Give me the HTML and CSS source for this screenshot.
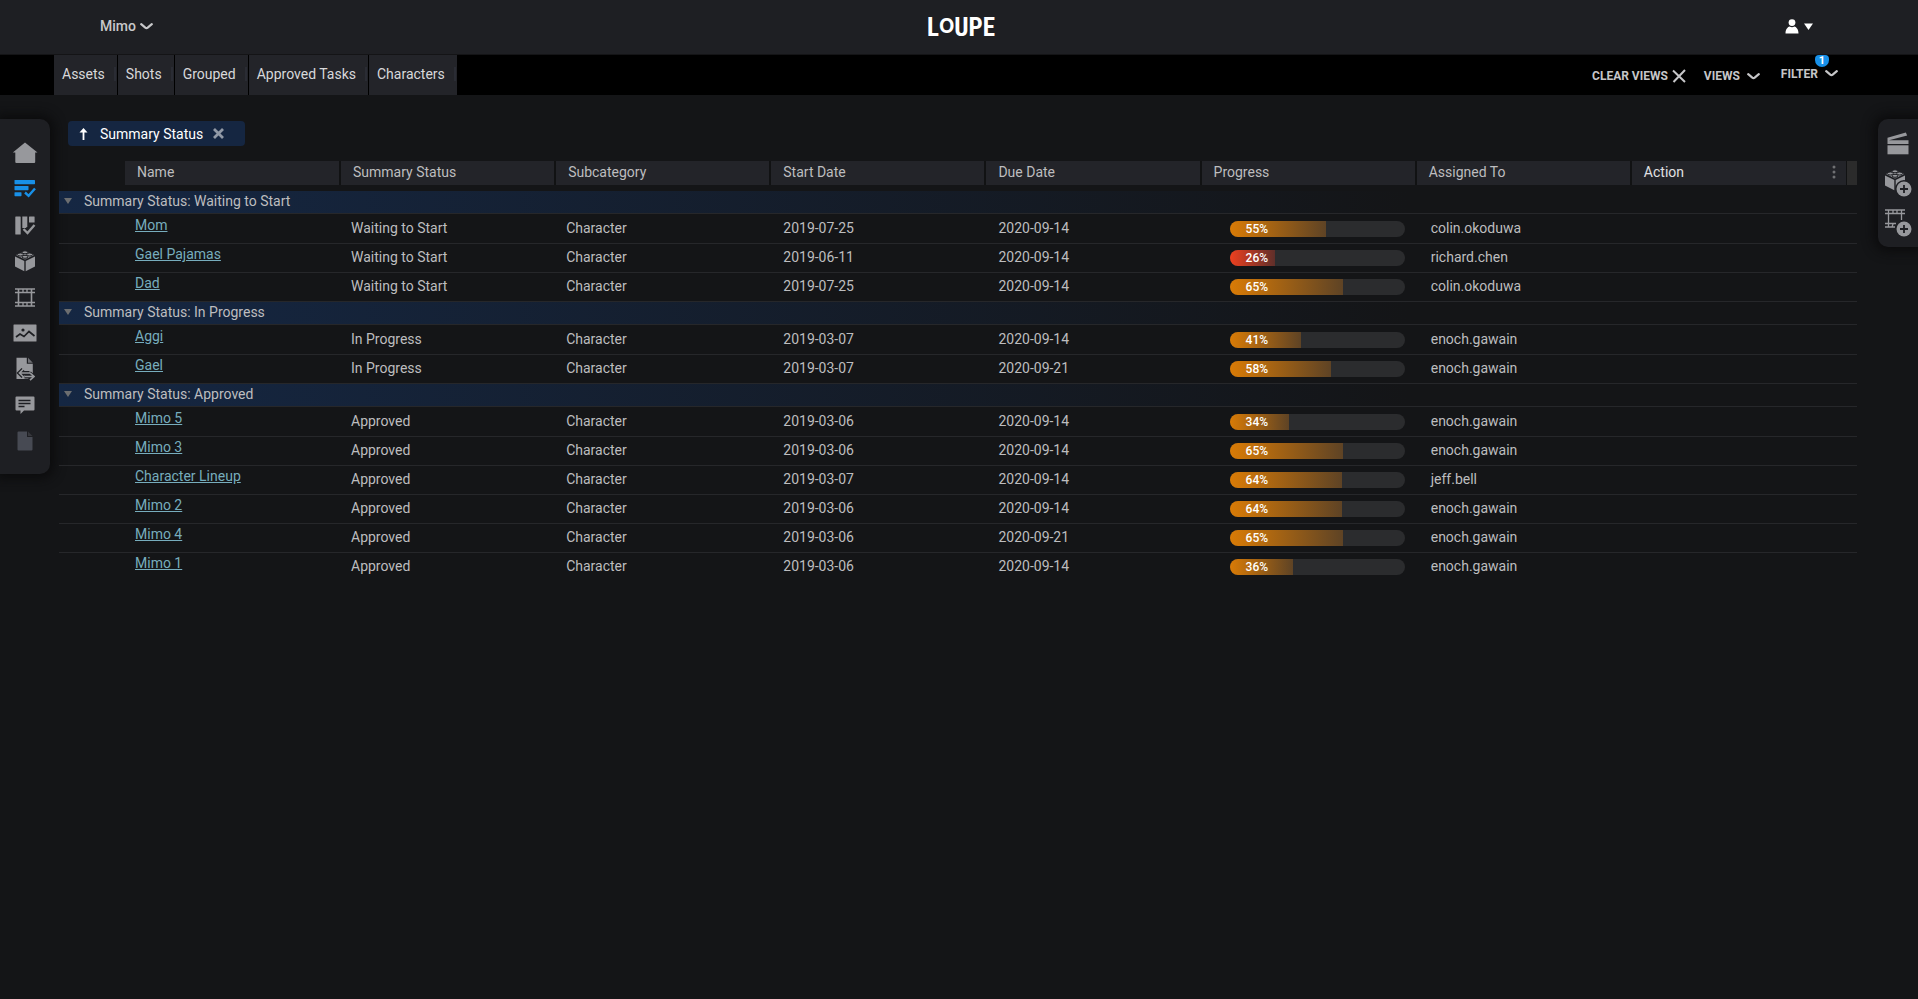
FILE: index.html
```html
<!DOCTYPE html>
<html lang="en">
<head>
<meta charset="utf-8">
<title>Loupe</title>
<link rel="stylesheet" href="styles.css">
</head>
<body>
<svg class="defs" aria-hidden="true">
  <symbol id="chevron" viewBox="0 0 13 7"><path d="M1.200 1.200 5.300 4.600Q6.500 5.500 7.700 4.600L11.800 1.200" fill="none" stroke="currentColor" stroke-width="2.200" stroke-linecap="round"/></symbol>
  <symbol id="plus" viewBox="0 0 16 16"><circle cx="8" cy="8" r="7.500" fill="currentColor"/><path d="M8 4v8M4 8h8" stroke="#1e1f23" stroke-width="1.800"/></symbol>
</svg>
<header class="header">
  <button class="project" type="button">Mimo <svg width="13" height="7"><use href="#chevron"/></svg></button>
  <div class="logo">L<span>O</span>UPE</div>
  <button class="user" type="button" aria-label="Account">
    <svg width="14" height="15" viewBox="0 0 14 15" fill="currentColor"><circle cx="7" cy="3.600" r="3.400"/><path d="M.5 14.500C.5 10 3 8 4.500 7.600Q7 9 9.500 7.600C11 8 13.500 10 13.500 14.500Z"/></svg>
    <svg width="9" height="7" viewBox="0 0 9 7" fill="currentColor"><path d="M0 .5h9L4.500 7Z"/></svg>
  </button>
</header>
<nav class="bar">
  <div class="tabs">
    <button type="button">Assets</button><button type="button">Shots</button><button type="button">Grouped</button><button type="button">Approved Tasks</button><button type="button">Characters</button>
  </div>
  <div class="tools">
    <button type="button" class="clear">CLEAR VIEWS <svg width="14" height="14" viewBox="0 0 14 14"><path d="M1 1.500 13 13M13 1 1.500 13" stroke="currentColor" stroke-width="2"/></svg></button>
    <button type="button" class="views">VIEWS <svg width="13" height="7"><use href="#chevron"/></svg></button>
    <button type="button" class="filter">FILTER <svg width="13" height="7"><use href="#chevron"/></svg><span class="badge">1</span></button>
  </div>
</nav>
<main class="page">
  <aside class="side left">
    <a href="#" aria-label="Home"><svg width="26" height="22" viewBox="0 0 26 22" fill="currentColor"><path d="M13 .5 25.500 10.500H23.200V20Q23.200 21 22.200 21H4.300Q3.300 21 3.300 20V10.500H.8Z"/></svg></a>
    <a href="#" class="active" aria-label="Tasks"><svg width="22" height="18" viewBox="0 0 22 18" fill="currentColor"><rect y="0" x=".5" width="20.500" height="4.200" rx=".6"/><rect x=".5" y="6" width="14" height="4.200" rx=".6"/><rect x=".5" y="12.200" width="7" height="4" rx=".6"/><path d="m11 12.500 3.600 3.300L21 8.500" fill="none" stroke="currentColor" stroke-width="2.400"/></svg></a>
    <a href="#" aria-label="Board"><svg width="22" height="19" viewBox="0 0 22 19" fill="currentColor"><rect x="1.300" y=".5" width="5.400" height="18" rx=".5"/><path d="M8.300.5h5v10l-1.500 1.600H8.300Z"/><rect x="15" y=".5" width="5.600" height="6" rx=".5"/><path d="m9.500 13 4 4L20.500 9" fill="none" stroke="currentColor" stroke-width="2.300"/></svg></a>
    <a href="#" aria-label="Assets"><svg width="22" height="22" viewBox="0 0 22 22"><g id="brick"><path d="M1 6.500 10.300 11V21.300L1 16.500ZM21 6.500 11.700 11V21.300L21 16.500Z" fill="currentColor"/><path d="M2 5 11 1.200 20 5 11 9.500Z" fill="currentColor"/><g fill="currentColor" stroke="#1e1f23"><ellipse cx="11" cy="2.300" rx="2.900" ry="1.500"/><ellipse cx="6.300" cy="4.500" rx="2.900" ry="1.500"/><ellipse cx="15.700" cy="4.500" rx="2.900" ry="1.500"/><ellipse cx="11" cy="6.800" rx="2.900" ry="1.500"/></g></g></svg></a>
    <a href="#" aria-label="Shots"><svg width="22" height="19" viewBox="0 0 22 19" fill="none" stroke="currentColor" stroke-width="1.300"><path d="M1 1H21M1 4.500H21M1 14.500H21M1 18H21"/><path d="M4.500 1V18M17.500 1V18" stroke-width="1.600"/><path d="M9 1V4.500M13 1V4.500M9 14.500V18M13 14.500V18"/></svg></a>
    <a href="#" aria-label="Media"><svg width="24" height="18" viewBox="0 0 24 18"><rect x=".5" y=".5" width="23" height="17" rx=".5" fill="currentColor"/><circle cx="10" cy="6" r="1.600" fill="#1e1f23"/><path d="m3 13 4-3 4 2.500 5-5 5.500 4.500" fill="none" stroke="#1e1f23" stroke-width="1.700"/></svg></a>
    <a href="#" aria-label="Transfers"><svg width="20" height="24" viewBox="0 0 20 24"><path d="M1.500.8h10.300v6h6V22H1.500Z" fill="currentColor"/><path d="m13 .8 4.800 5H13Z" fill="#6f7075"/><path d="M4.500 16h10M8 12.300 4.300 16 8 19.700M9.500 19.500H18M14.500 16l3.800 3.500-3.800 3.500" fill="none" stroke="#1e1f23" stroke-width="4"/><path d="M4.500 16H15M8.500 12 4.500 16l4 4M9.500 19.500H18.500M15 15.800l4 3.700-4 3.700" fill="none" stroke="currentColor" stroke-width="1.700"/></svg></a>
    <a href="#" aria-label="Notes"><svg width="20" height="18" viewBox="0 0 20 18"><path d="M1.500.5h17q1 0 1 1v12q0 1-1 1H9L5.500 18v-3.500h-4q-1 0-1-1v-12q0-1 1-1Z" fill="currentColor"/><path d="M3.500 4.500h12M3.500 7.500h12M3.500 10.500h6" stroke="#1e1f23" stroke-width="1.300"/></svg></a>
    <a href="#" class="muted" aria-label="Files"><svg width="16" height="20" viewBox="0 0 16 20" fill="currentColor"><path d="M1.500.5H10V6h5.500v12.500q0 1-1 1h-13q-1 0-1-1v-17q0-1 1-1Z"/><path d="M11 .5 15.500 5H11Z" fill="#36373c"/></svg></a>
  </aside>
  <section class="content">
    <div class="chip"><svg width="11" height="12" viewBox="0 0 11 12" fill="currentColor"><path d="M4.500 0 8.500 4.500H5.400V12H3.600V4.500H.5Z"/></svg><span>Summary Status</span><button type="button" aria-label="Remove grouping"><svg width="11" height="11" viewBox="0 0 11 11"><path d="m1 1 9 9m0-9-9 9" stroke="currentColor" stroke-width="2.800"/></svg></button></div>
    <table class="grid">
      <colgroup><col class="c-group"><col class="c-name"><col><col><col><col><col><col><col><col class="c-end"></colgroup>
      <thead>
        <tr><td></td><th>Name</th><th>Summary Status</th><th>Subcategory</th><th>Start Date</th><th>Due Date</th><th>Progress</th><th>Assigned To</th><th class="action"><div>Action<svg width="4" height="14" viewBox="0 0 4 14" fill="#6f7073"><circle cx="2" cy="2" r="1.500"/><circle cx="2" cy="7" r="1.500"/><circle cx="2" cy="12" r="1.500"/></svg></div></th><td class="end"></td></tr>
      </thead>
      <tbody>
        <tr class="group"><td colspan="10"><button type="button">Summary Status: Waiting to Start</button></td></tr>
        <tr><td></td><td><a href="#">Mom</a></td><td>Waiting to Start</td><td>Character</td><td>2019-07-25</td><td>2020-09-14</td><td><div class="meter"><div style="width:55%">55%</div></div></td><td>colin.okoduwa</td><td></td><td></td></tr>
        <tr><td></td><td><a href="#">Gael Pajamas</a></td><td>Waiting to Start</td><td>Character</td><td>2019-06-11</td><td>2020-09-14</td><td><div class="meter low"><div style="width:26%">26%</div></div></td><td>richard.chen</td><td></td><td></td></tr>
        <tr><td></td><td><a href="#">Dad</a></td><td>Waiting to Start</td><td>Character</td><td>2019-07-25</td><td>2020-09-14</td><td><div class="meter"><div style="width:65%">65%</div></div></td><td>colin.okoduwa</td><td></td><td></td></tr>
      </tbody>
      <tbody>
        <tr class="group"><td colspan="10"><button type="button">Summary Status: In Progress</button></td></tr>
        <tr><td></td><td><a href="#">Aggi</a></td><td>In Progress</td><td>Character</td><td>2019-03-07</td><td>2020-09-14</td><td><div class="meter"><div style="width:41%">41%</div></div></td><td>enoch.gawain</td><td></td><td></td></tr>
        <tr><td></td><td><a href="#">Gael</a></td><td>In Progress</td><td>Character</td><td>2019-03-07</td><td>2020-09-21</td><td><div class="meter"><div style="width:58%">58%</div></div></td><td>enoch.gawain</td><td></td><td></td></tr>
      </tbody>
      <tbody>
        <tr class="group"><td colspan="10"><button type="button">Summary Status: Approved</button></td></tr>
        <tr><td></td><td><a href="#">Mimo 5</a></td><td>Approved</td><td>Character</td><td>2019-03-06</td><td>2020-09-14</td><td><div class="meter"><div style="width:34%">34%</div></div></td><td>enoch.gawain</td><td></td><td></td></tr>
        <tr><td></td><td><a href="#">Mimo 3</a></td><td>Approved</td><td>Character</td><td>2019-03-06</td><td>2020-09-14</td><td><div class="meter"><div style="width:65%">65%</div></div></td><td>enoch.gawain</td><td></td><td></td></tr>
        <tr><td></td><td><a href="#">Character Lineup</a></td><td>Approved</td><td>Character</td><td>2019-03-07</td><td>2020-09-14</td><td><div class="meter"><div style="width:64%">64%</div></div></td><td>jeff.bell</td><td></td><td></td></tr>
        <tr><td></td><td><a href="#">Mimo 2</a></td><td>Approved</td><td>Character</td><td>2019-03-06</td><td>2020-09-14</td><td><div class="meter"><div style="width:64%">64%</div></div></td><td>enoch.gawain</td><td></td><td></td></tr>
        <tr><td></td><td><a href="#">Mimo 4</a></td><td>Approved</td><td>Character</td><td>2019-03-06</td><td>2020-09-21</td><td><div class="meter"><div style="width:65%">65%</div></div></td><td>enoch.gawain</td><td></td><td></td></tr>
        <tr><td></td><td><a href="#">Mimo 1</a></td><td>Approved</td><td>Character</td><td>2019-03-06</td><td>2020-09-14</td><td><div class="meter"><div style="width:36%">36%</div></div></td><td>enoch.gawain</td><td></td><td></td></tr>
      </tbody>
    </table>
  </section>
  <aside class="side right">
    <button type="button" aria-label="New production"><svg width="22" height="23" viewBox="0 0 22 23" fill="currentColor"><path d="M.5 5.700 18.800.5 20.200 3.500 2 8.300H21.500V12H.5Z"/><rect x=".5" y="13.300" width="21" height="9"/></svg></button>
    <button type="button" aria-label="Add asset"><svg width="28" height="28" viewBox="0 0 28 28"><use href="#brick"/><circle cx="20" cy="20" r="9" fill="#1e1f23"/><use href="#plus" x="12" y="12" width="16" height="16"/></svg></button>
    <button type="button" aria-label="Add shot"><svg width="28" height="28" viewBox="0 0 28 28" fill="none" stroke="currentColor" stroke-width="1.300"><path d="M1 1H21M1 4.500H21M1 14.500H12M1 18H11M4.500 1V18M17.500 1V11M9 1V4.500M13 1V4.500M8 18l1-3"/><use href="#plus" x="12" y="12" width="16" height="16" stroke="none"/></svg></button>
  </aside>
</main>
</body>
</html>
```

FILE: styles.css
```css
* { box-sizing: border-box; }
body {
  margin: 0;
  min-height: 100vh;
  background: #141517;
  color: #bdbdbf;
  font: 14px/20px Roboto, "Liberation Sans", sans-serif;
}
button {
  border: 0;
  padding: 0;
  background: none;
  color: inherit;
  font: inherit;
}
svg { display: block; flex: none; }
.defs { position: absolute; width: 0; height: 0; }

.header {
  display: grid;
  grid-template-columns: 1fr auto 1fr;
  align-items: center;
  height: 55px;
  padding: 0 96px 0 100px;
  background: #1e1f23;
  border-bottom: 1px solid #141416;
}
.project {
  display: flex;
  align-items: center;
  gap: 4px;
  justify-self: start;
  padding-bottom: 2px;
  color: #c8c8ca;
  font-weight: 500;
}
.logo {
  display: flex;
  align-items: center;
  padding-top: 2px;
  color: #fff;
  font: bold 25px/52px "Roboto Condensed", "Liberation Sans Narrow", Roboto, sans-serif;
}
.logo span {
  padding-bottom: 4px;
  font: 700 20px/48px Inter, sans-serif;
}
.user {
  display: flex;
  align-items: center;
  gap: 5px;
  justify-self: end;
  margin-right: 9px;
  padding-bottom: 2px;
  color: #fff;
}

.bar {
  display: flex;
  justify-content: space-between;
  height: 40px;
  padding: 0 80px 0 54px;
  background: #000;
}
.tabs { display: flex; gap: 1px; }
.tabs button {
  display: flex;
  align-items: center;
  gap: 9px;
  padding: 0 1px 2px 8px;
  background: #232429;
  color: #d8d8da;
}
.tabs button::after {
  content: "";
  width: 2px;
  height: 14px;
  background: #2a2c34;
}
.tools {
  display: flex;
  font-size: 12px;
  font-weight: 700;
  color: #c6c6c8;
}
.tools button { display: flex; align-items: center; padding-top: 2px; }
.clear { gap: 4px; }
.views { gap: 7px; margin-left: 18px; }
.tools .filter {
  position: relative;
  gap: 7px;
  margin-left: 21px;
  padding: 0 0 3px;
}
.badge {
  position: absolute;
  top: 0;
  right: 9px;
  width: 14px;
  height: 12px;
  border-radius: 4px 4px 7px 7px;
  background: #1890e8;
  color: #fff;
  font-size: 11px;
  line-height: 11px;
  text-align: center;
}

.page {
  display: grid;
  grid-template-columns: 50px minmax(0, 1fr) 40px;
  align-items: start;
}
.side {
  display: flex;
  flex-direction: column;
  margin-top: 24px;
  background: #1e1f23;
  color: #97989c;
  box-shadow: 0 0 12px 4px #0b0b0c;
}
.side a, .side button {
  display: grid;
  place-items: center;
  height: 36px;
  color: inherit;
}
.left {
  padding: 16px 0 15px;
  border-radius: 0 10px 10px 0;
}
.side .active { color: #1890e8; }
.side .muted { color: #474a53; }
.right {
  padding: 4px 0;
  border-radius: 10px 0 0 10px;
}
.side button { height: 40px; }

.content {
  display: flex;
  flex-direction: column;
  align-items: flex-start;
  gap: 15px;
  padding: 26px 21px 0 9px;
}
.chip {
  display: flex;
  align-items: center;
  gap: 10px;
  height: 25px;
  margin-left: 9px;
  padding: 0 21px 0 11px;
  border-radius: 4px;
  background: #152641;
  color: #fff;
}
.chip button { color: #9199a6; }

.grid {
  width: 100%;
  table-layout: fixed;
  border-collapse: separate;
  border-spacing: 0;
}
.c-group { width: 66px; }
.c-name { width: 216px; }
.c-end { width: 10px; }
.grid th, .grid td { padding: 0; text-align: left; font-weight: 400; }
.grid th {
  height: 24px;
  padding: 0 12px 2px;
  border-right: 2px solid #111213;
  background: #232429;
  line-height: 22px;
}
.grid .action { padding-right: 10px; color: #e0e0e2; border-right-width: 1px; }
.action div { display: flex; justify-content: space-between; align-items: center; }
.grid .end { background: #2b2b2b; }
.grid thead + tbody::before {
  content: "";
  display: table-row;
  height: 6px;
}
.grid tbody td {
  height: 29px;
  padding-left: 10px;
  border-bottom: 1px solid #26272a;
  vertical-align: top;
  line-height: 26px;
}
.grid tbody td:nth-child(n+5) { padding-left: 12px; }
.grid tbody td:nth-child(8) { padding-left: 14px; }
.grid tbody .group td {
  height: 23px;
  padding-left: 5px;
  background: linear-gradient(90deg, #152743, #141517 75%);
}
.group button {
  display: flex;
  align-items: center;
  gap: 12px;
  line-height: 20px;
}
.group button::before {
  content: "";
  border: 4px solid transparent;
  border-top: 6px solid #6c6e70;
  border-bottom: 0;
}
.grid .group + tr td { height: 30px; padding-top: 1px; }
.grid tbody:last-child tr:last-child td { border-bottom: 0; }
.grid a {
  display: inline-block;
  color: #77adbd;
  line-height: 20px;
  text-decoration: underline;
  vertical-align: top;
}
.meter {
  margin: 6px 12px 0 16px;
  border-radius: 8px;
  background: #2b2c2e;
  overflow: hidden;
}
.meter div {
  padding-left: 16px;
  background: linear-gradient(90deg, #d97b06, #5e4325);
  color: #fff;
  font-size: 12px;
  font-weight: 500;
  line-height: 16px;
}
.low div { background: linear-gradient(90deg, #ee401f, #5f2f2a); }
```
